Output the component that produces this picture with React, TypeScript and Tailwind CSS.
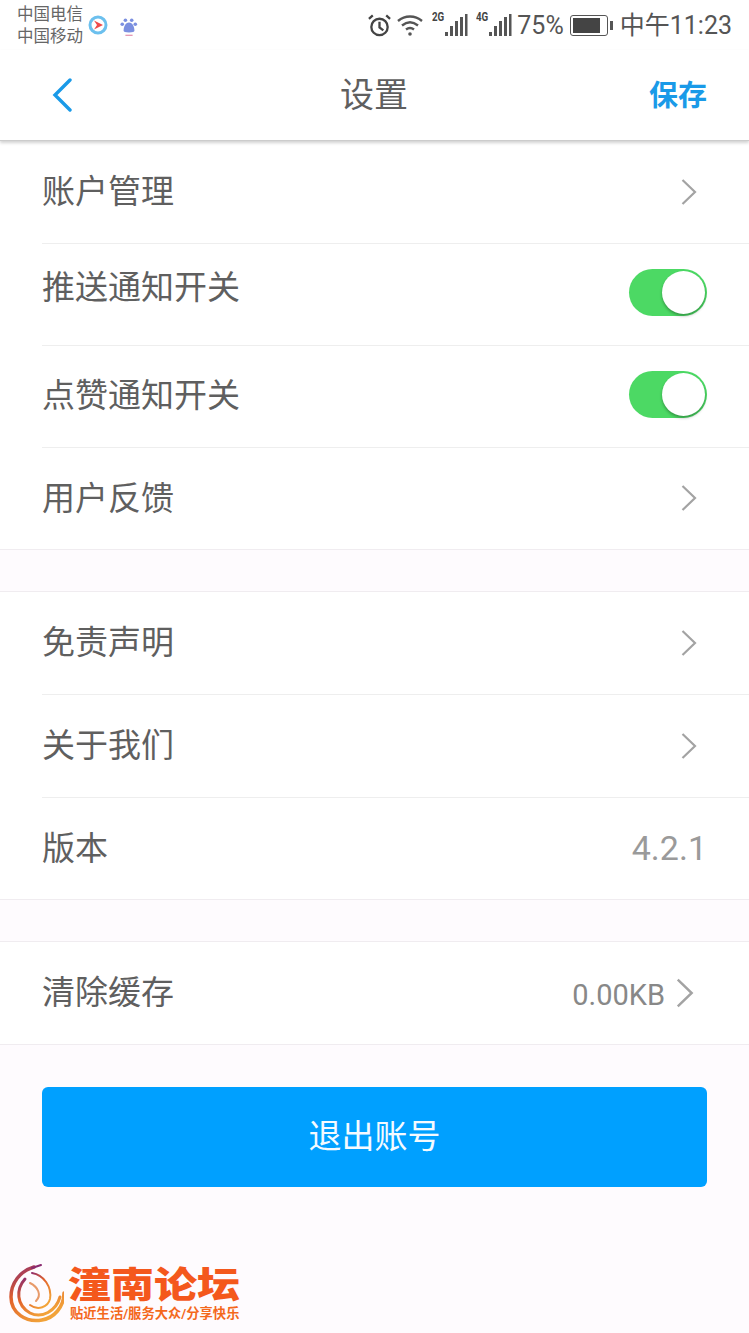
const CJK = "font-['Roboto','Noto_Sans_CJK_SC',sans-serif]";

function Chevron({ className = 'w-[18px] h-[28px] text-[#a3a3a3]' }: { className?: string }) {
  return (
    <svg viewBox="0 0 18 28" className={className} fill="none" stroke="currentColor" strokeWidth="2.2">
      <path d="M2.5 2 L15 14 L2.5 26" />
    </svg>
  );
}

function Toggle() {
  return (
    <div className="relative mt-[-4px] w-[78px] h-[47px] rounded-full bg-[#4cd964]">
      <div className="absolute right-[2px] top-[2px] w-[43px] h-[43px] rounded-full bg-white shadow-[0_2px_3px_rgba(0,0,0,0.3)]" />
    </div>
  );
}

function Signal({ label }: { label: string }) {
  return (
    <div className="relative w-[36px] h-[26px]">
      <span className="absolute left-[-1px] top-[-2px] text-[13px] leading-[13px] font-bold text-[#444] font-['Roboto',sans-serif] scale-x-75 origin-left">
        {label}
      </span>
      <svg viewBox="0 0 36 26" className="w-[36px] h-[26px]" fill="#555">
        <rect x="12" y="20" width="3" height="4" />
        <rect x="17" y="14" width="3" height="10" />
        <rect x="22" y="9" width="3" height="15" />
        <rect x="27" y="5" width="3" height="19" />
        <rect x="32" y="2" width="2.5" height="22" />
      </svg>
    </div>
  );
}

function StatusBar() {
  return (
    <div className="h-[50px] flex items-center pl-[17px] pr-[17px] bg-white text-[#555]">
      <div className="mt-[2px] text-[16.5px] leading-[22px] text-[#666] w-[67px] whitespace-nowrap">
        <div>中国电信</div>
        <div>中国移动</div>
      </div>
      <svg viewBox="0 0 20 20" className="w-[20px] h-[20px] ml-[4px]">
        <circle cx="10" cy="10" r="8" fill="white" stroke="#6cc0ee" strokeWidth="3" />
        <path d="M6 5.5 L15 10 L6 14.5 L9 10 Z" fill="#ee4b4b" />
      </svg>
      <svg viewBox="0 0 20 24" className="w-[18px] h-[22px] ml-[12px] mt-[4px]" fill="#7b8fe0">
        <circle cx="6" cy="4.5" r="2" />
        <circle cx="13" cy="4.5" r="2" />
        <circle cx="2.5" cy="9" r="2" />
        <circle cx="17" cy="9" r="2" />
        <path d="M10 7 C14 7 16 12 16 16 C16 18 14 18 10 18 C6 18 4 18 4 16 C4 12 6 7 10 7 Z" />
        <rect x="6" y="20.5" width="8" height="1.5" fill="#e59ab5" />
      </svg>
      <div className="ml-auto flex items-center">
        <svg viewBox="0 0 26 26" className="w-[25px] h-[25px]" fill="none" stroke="#444" strokeWidth="2.4">
          <circle cx="13" cy="14.5" r="8.5" />
          <path d="M13 9 V15 L17 18" />
          <path d="M2 6 L6 2.5 M24 6 L20 2.5" />
        </svg>
        <svg viewBox="0 0 28 24" className="w-[28px] h-[24px] ml-[4px]" fill="none" stroke="#555" strokeWidth="2.4">
          <path d="M2 8 C9 2 19 2 26 8" />
          <path d="M6 12.5 C11 8.5 17 8.5 22 12.5" />
          <path d="M10 16.5 C12.5 14.5 15.5 14.5 18 16.5" />
          <circle cx="14" cy="21" r="1.8" fill="#555" stroke="none" />
        </svg>
        <div className="ml-[9px]">
          <Signal label="2G" />
        </div>
        <div className="ml-[8px]">
          <Signal label="4G" />
        </div>
        <span className="ml-[4px] text-[25px] leading-none font-['Roboto',sans-serif] text-[#555]">75%</span>
        <div className="ml-[6px] flex items-center">
          <div className="w-[38px] h-[21px] border-[1.5px] border-[#555] rounded-[3px] p-[2px]">
            <div className="w-[27px] h-full bg-[#444]" />
          </div>
          <div className="ml-[2px] w-[3px] h-[9px] bg-[#555]" />
        </div>
        <span className={`ml-[7px] text-[25px] leading-none text-[#555] whitespace-nowrap ${CJK}`}>中午11:23</span>
      </div>
    </div>
  );
}

function NavBar() {
  return (
    <div className="relative z-10 h-[91px] flex items-center justify-between pl-[52px] pr-[42px] bg-white border-b border-[#ccc] shadow-[0_2px_3px_rgba(0,0,0,0.18)]">
      <svg viewBox="0 0 20 34" className="w-[20px] h-[34px]" fill="none" stroke="#1a9ae8" strokeWidth="3.4" strokeLinecap="round">
        <path d="M18 2 L3 17 L18 32" />
      </svg>
      <span className="text-[34px] leading-none text-[#5f5f5f] ml-[27px]">设置</span>
      <span className="text-[29px] leading-none font-bold text-[#1a9ae8] mt-[2px]">保存</span>
    </div>
  );
}

type RowProps = {
  title: string;
  last?: boolean;
  heightClass?: string;
  titleClass?: string;
  children?: React.ReactNode;
};

function Row({ title, last, heightClass = 'h-[102px]', titleClass = 'mt-[-2px]', children }: RowProps) {
  return (
    <div className={`${heightClass} ml-[42px] pr-[42px] flex items-center justify-between ${last ? '' : 'border-b border-[#eeeeee]'}`}>
      <span className={`text-[33px] leading-none text-[#5f5f5f] ${titleClass}`}>{title}</span>
      {children}
    </div>
  );
}

function ArrowSlot() {
  return (
    <div className="pr-[9px] mt-[-1px] flex">
      <Chevron />
    </div>
  );
}

function Section({ children }: { children: React.ReactNode }) {
  return <div className="bg-white border-y border-[#f0ecf0]">{children}</div>;
}

function Logo() {
  return (
    <div className="flex items-start pl-[8px]">
      <svg viewBox="0 0 56 62" className="w-[56px] h-[62px]" fill="none" strokeLinecap="round">
        <defs>
          <linearGradient id="phoenix" x1="0" y1="0" x2="0.6" y2="1">
            <stop offset="0" stopColor="#8a2a70" />
            <stop offset="0.45" stopColor="#e2622a" />
            <stop offset="1" stopColor="#f2a33a" />
          </linearGradient>
        </defs>
        <path d="M26 4 C12 8 3 20 3 34 C3 50 18 60 34 57 C46 55 56 44 56 30" stroke="url(#phoenix)" strokeWidth="3.5" />
        <path d="M17 16 C8 26 8 42 22 50 C34 56 48 48 52 34" stroke="url(#phoenix)" strokeWidth="3" />
        <path d="M24 10 C36 12 44 24 42 36 C40 44 30 48 22 42" stroke="url(#phoenix)" strokeWidth="2" />
        <path d="M22 20 C30 24 34 32 28 38" stroke="#e89a6a" strokeWidth="2" />
        <path d="M24 5 L33 2" stroke="#8a2a70" strokeWidth="2" />
      </svg>
      <div className="ml-[4px] pt-[4px]">
        <div className="text-[43px] leading-[43px] font-black text-[#f4581c] whitespace-nowrap scale-y-[0.85] origin-top">潼南论坛</div>
        <div className="mt-[-3px] ml-[2px] text-[13.3px] leading-[14px] font-bold text-[#f4681c] whitespace-nowrap">贴近生活/服务大众/分享快乐</div>
      </div>
    </div>
  );
}

export default function App() {
  return (
    <div className={`w-[749px] h-[1333px] overflow-hidden bg-[#fefbfe] ${CJK}`}>
      <StatusBar />
      <NavBar />

      <div className="bg-white border-b border-[#f0ecf0] pt-[1px]">
        <Row title="账户管理" titleClass="mt-[-3px]">
          <ArrowSlot />
        </Row>
        <Row title="推送通知开关" titleClass="mt-[-14px]">
          <Toggle />
        </Row>
        <Row title="点赞通知开关">
          <Toggle />
        </Row>
        <Row title="用户反馈" last heightClass="h-[101px]" titleClass="mt-0">
          <ArrowSlot />
        </Row>
      </div>

      <div className="h-[41px]" />

      <Section>
        <Row title="免责声明" heightClass="h-[103px]">
          <ArrowSlot />
        </Row>
        <Row title="关于我们" heightClass="h-[103px]">
          <ArrowSlot />
        </Row>
        <Row title="版本" last heightClass="h-[101px]" titleClass="mt-0">
          <span className="text-[34px] leading-none text-[#9a9a9a] mt-[-2px]">4.2.1</span>
        </Row>
      </Section>

      <div className="h-[41px]" />

      <Section>
        <Row title="清除缓存" last>
          <div className="flex items-center pr-[12px]">
            <span className="mt-[5px] text-[29px] leading-none text-[#888]">0.00KB</span>
            <Chevron className="w-[20px] h-[32px] ml-[10px] text-[#a3a3a3]" />
          </div>
        </Row>
      </Section>

      <div className="mx-[42px] mt-[42px] h-[100px] rounded-[6px] bg-[#00a0ff] flex items-center justify-center text-[33px] text-[#f4faff]">
        退出账号
      </div>

      <div className="mt-[76px]">
        <Logo />
      </div>
    </div>
  );
}
